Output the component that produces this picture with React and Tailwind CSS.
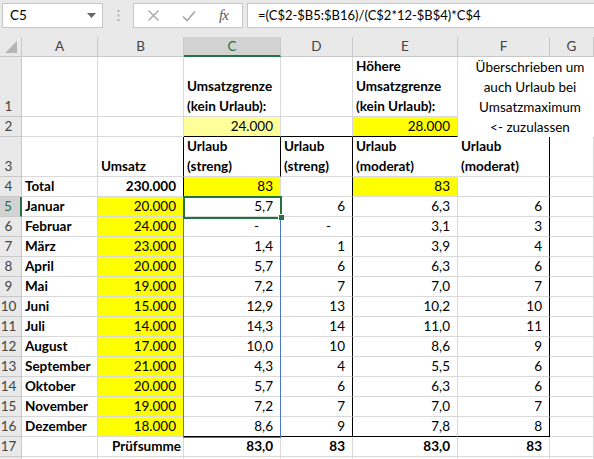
import React from 'react'

const months = [
    ['Januar', '20.000', '5,7', '6', '6,3', '6'],
    ['Februar', '24.000', '-', '-', '3,1', '3'],
    ['März', '23.000', '1,4', '1', '3,9', '4'],
    ['April', '20.000', '5,7', '6', '6,3', '6'],
    ['Mai', '19.000', '7,2', '7', '7,0', '7'],
    ['Juni', '15.000', '12,9', '13', '10,2', '10'],
    ['Juli', '14.000', '14,3', '14', '11,0', '11'],
    ['August', '17.000', '10,0', '10', '8,6', '9'],
    ['September', '21.000', '4,3', '4', '5,5', '6'],
    ['Oktober', '20.000', '5,7', '6', '6,3', '6'],
    ['November', '19.000', '7,2', '7', '7,0', '7'],
    ['Dezember', '18.000', '8,6', '9', '7,8', '8'],
]

// one spreadsheet cell: owns its right and bottom grid line
const Cell = ({ children, r, b, bg = 'bg-white', align = 'left', bold, className = '' }) => {
    const al =
        align === 'right' ? 'justify-end pr-[7px] text-right'
        : align === 'dash' ? 'justify-end pr-[21px]'
        : align === 'text-right' ? 'justify-end pr-[2px] text-right'
        : 'justify-start pl-[3px]'
    return (
        <div
            className={`flex items-end border-r border-b whitespace-pre leading-[20px] text-black ${bg} ${al} ${
                r ? 'border-r-black' : 'border-r-[#d9d9d9]'
            } ${b ? 'border-b-black' : 'border-b-[#d9d9d9]'} ${bold ? 'font-bold' : ''} ${className}`}
        >
            {children}
        </div>
    )
}

const RowHead = ({ n, selected }) => (
    <div
        className={`flex items-end justify-center pr-[4px] leading-[20px] border-b border-b-[#c8c8c8] ${
            selected
                ? 'bg-[#d2d2d2] text-[#217346] border-r-2 border-r-[#217346]'
                : 'bg-[#e9e9e9] text-[#444] border-r border-r-[#c8c8c8]'
        }`}
    >
        {n}
    </div>
)

const ColHead = ({ l, selected }) => (
    <div
        className={`flex items-center justify-center border-r border-r-[#c8c8c8] ${
            selected
                ? 'bg-[#d2d2d2] text-[#217346] border-b-2 border-b-[#217346]'
                : 'bg-[#e9e9e9] text-[#444] border-b border-b-[#c8c8c8]'
        }`}
    >
        {l}
    </div>
)

export default function App() {
    return (
        <div className="w-[594px] h-[459px] overflow-hidden bg-white font-['Lato','Liberation_Sans',sans-serif] text-[13.5px]">
            {/* formula bar */}
            <div className="h-[37px] bg-[#e9e9e9] flex items-start pt-[3px] pl-[2px]">
                <div className="w-[101px] h-[25px] bg-white border border-[#c6c6c6] flex items-center justify-between pl-[7px] pr-[6px] text-black">
                    <span>C5</span>
                    <svg width="9" height="5" viewBox="0 0 9 5"><path d="M0 0h9L4.5 5z" fill="#666" /></svg>
                </div>
                <div className="w-[30px] h-[25px] flex items-center justify-center">
                    <svg width="3" height="11" viewBox="0 0 3 11"><g fill="#b0b0b0"><rect x="0.5" y="0" width="2" height="2" /><rect x="0.5" y="4.5" width="2" height="2" /><rect x="0.5" y="9" width="2" height="2" /></g></svg>
                </div>
                <div className="w-[110px] h-[25px] bg-white border border-[#c6c6c6] flex items-center pl-[13px]">
                    <svg width="13" height="13" viewBox="0 0 13 13"><path d="M1.5 1.5l10 10M11.5 1.5l-10 10" stroke="#a6a6a6" strokeWidth="1.4" /></svg>
                    <svg className="ml-[22px]" width="14" height="12" viewBox="0 0 14 12"><path d="M1 6.5l4 4L13 1.5" stroke="#a6a6a6" strokeWidth="1.6" fill="none" /></svg>
                    <span className="ml-[23px] italic font-['Liberation_Serif',serif] text-[15px] text-[#595959] tracking-[-1px]">fx</span>
                </div>
                <div className="flex-1 ml-[4px] h-[25px] bg-white border border-r-0 border-[#c6c6c6] flex items-center pl-[10px] text-black whitespace-nowrap text-[13px]">
                    =(C$2-$B5:$B16)/(C$2*12-$B$4)*C$4
                </div>
            </div>

            {/* sheet */}
            <div className="grid grid-cols-[22px_76px_86px_97px_72px_105px_92px_1fr] grid-rows-[20px_60px_20px_40px_repeat(15,20px)]">
                <div className="bg-[#e9e9e9] border-r border-b border-[#c8c8c8] flex items-end justify-end pr-[4px] pb-[3px]">
                    <svg width="12" height="12" viewBox="0 0 12 12"><path d="M12 0v12H0z" fill="#b5b5b5" /></svg>
                </div>
                {['A', 'B', 'C', 'D', 'E', 'F', 'G'].map((l) => (
                    <ColHead key={l} l={l} selected={l === 'C'} />
                ))}

                {/* row 1 */}
                <RowHead n="1" />
                <Cell />
                <Cell />
                <Cell bold>{'Umsatzgrenze\n(kein Urlaub):'}</Cell>
                <Cell />
                <Cell bold>{'Höhere\nUmsatzgrenze\n(kein Urlaub):'}</Cell>
                <div className="col-span-2 row-span-2 flex flex-col bg-white">
                    <div className="flex-1 pl-[8px] text-center leading-[20px] whitespace-pre text-black">
                        {'Überschrieben um\nauch Urlaub bei\nUmsatzmaximum\n<- zuzulassen'}
                    </div>
                    <div className="flex h-px">
                        <div className="w-[92px] bg-black" />
                        <div className="flex-1 bg-[#d9d9d9]" />
                    </div>
                </div>

                {/* row 2 */}
                <RowHead n="2" />
                <Cell />
                <Cell />
                <Cell bg="bg-[#ffff99]" align="right" b>24.000</Cell>
                <Cell b />
                <Cell bg="bg-[#ffff00]" align="right" b>28.000</Cell>

                {/* row 3 */}
                <RowHead n="3" />
                <Cell />
                <Cell bold r>Umsatz</Cell>
                <Cell bold r>{'Urlaub\n(streng)'}</Cell>
                <Cell bold r>{'Urlaub\n(streng)'}</Cell>
                <Cell bold className="border-r-white">{'Urlaub\n(moderat)'}</Cell>
                <Cell bold r>{'Urlaub\n(moderat)'}</Cell>
                <Cell />

                {/* row 4 */}
                <RowHead n="4" />
                <Cell bold>Total</Cell>
                <Cell bold align="right" r>230.000</Cell>
                <Cell bg="bg-[#ffff00]" align="right">83</Cell>
                <Cell r />
                <Cell bg="bg-[#ffff00]" align="right">83</Cell>
                <Cell r />
                <Cell />

                {/* months */}
                {months.map((m, i) => {
                    const last = i === months.length - 1
                    const first = i === 0
                    return (
                        <React.Fragment key={m[0]}>
                            <RowHead n={String(i + 5)} selected={first} />
                            <Cell bold>{m[0]}</Cell>
                            <Cell bg="bg-[#ffff00]" align="right" r>{m[1]}</Cell>
                            <div className={first ? 'relative flex' : 'flex'}>
                                <Cell align={m[2] === '-' ? 'dash' : 'right'} b={last} className="flex-1">{m[2]}</Cell>
                                {first && (
                                    <>
                                        <div className="absolute left-[-1px] top-[-1px] w-[98px] h-[242px] border border-[#4a78c8] pointer-events-none" />
                                        <div className="absolute left-[-1px] top-[-1px] w-[99px] h-[23px] border-2 border-[#217346] pointer-events-none" />
                                        <div className="absolute left-[94px] top-[17px] w-[6px] h-[6px] bg-[#217346] border-l border-t border-white" />
                                    </>
                                )}
                            </div>
                            <Cell align={m[3] === '-' ? 'dash' : 'right'} r b={last}>{m[3]}</Cell>
                            <Cell align="right" b={last}>{m[4]}</Cell>
                            <Cell align="right" r b={last}>{m[5]}</Cell>
                            <Cell />
                        </React.Fragment>
                    )
                })}

                {/* row 17 */}
                <RowHead n="17" />
                <Cell />
                <Cell bold align="text-right">Prüfsumme</Cell>
                <Cell bold align="right">83,0</Cell>
                <Cell bold align="right">83</Cell>
                <Cell bold align="right">83,0</Cell>
                <Cell bold align="right">83</Cell>
                <Cell />

                {/* row 18, only its top edge shows */}
                <RowHead n="" />
                <Cell />
                <Cell />
                <Cell />
                <Cell />
                <Cell />
                <Cell />
                <Cell />
            </div>
        </div>
    )
}
